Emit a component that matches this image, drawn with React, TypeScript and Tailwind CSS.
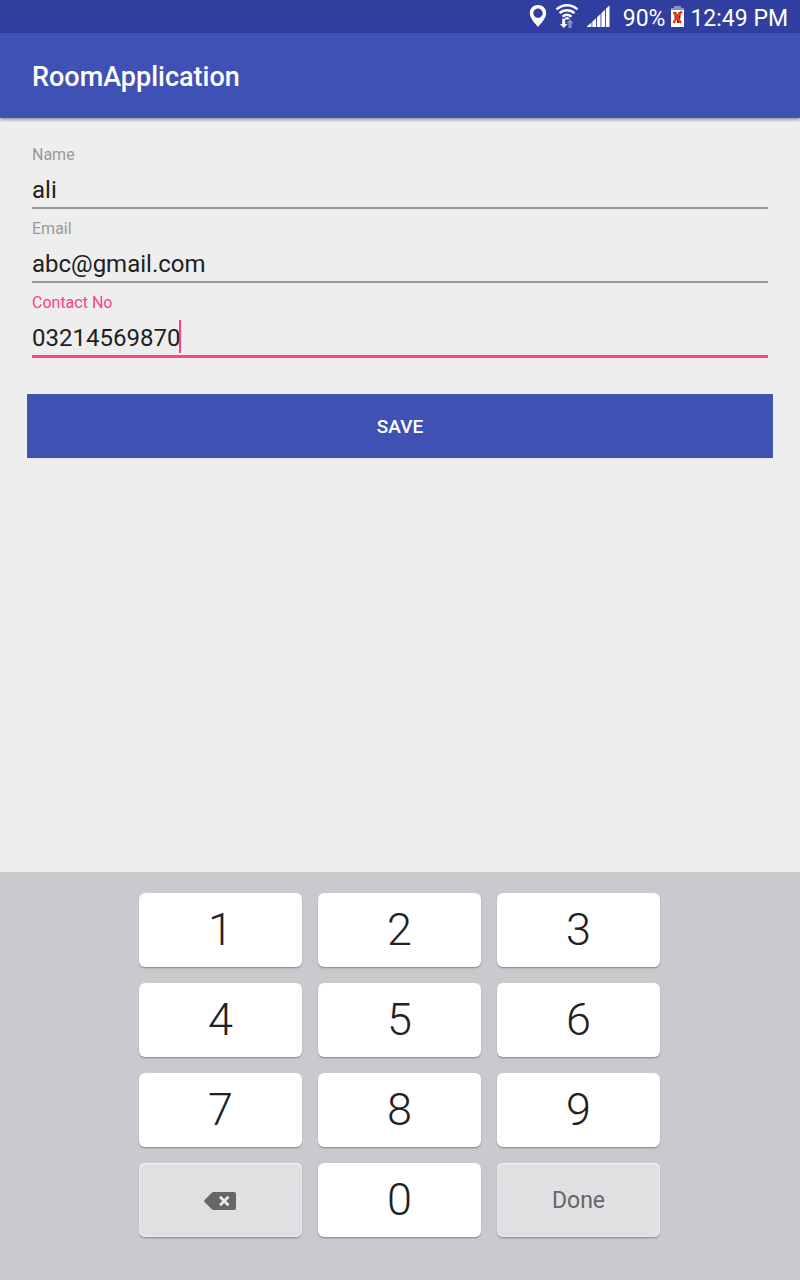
import { useState } from "react";
import clsx from "clsx";

function StatusBar() {
  return (
    <div className="flex h-[33px] items-center justify-end bg-[#303f9f] pr-3 text-white">
      <div className="mr-[13px] flex items-center gap-2 pb-0.5">
        <svg width="18" height="24" viewBox="0 0 18 24" aria-label="Location">
          <path
            fill="#fff"
            fillRule="evenodd"
            d="M9 1C4.300 1 .8 4.500 .8 9c0 5.200 5.400 10.500 8.200 14 2.800-3.500 8.200-8.800 8.200-14C17.200 4.500 13.700 1 9 1Zm0 3.500a4.700 4.700 0 1 1 0 9.400A4.700 4.700 0 0 1 9 4.500Z"
          />
        </svg>
        <svg width="24" height="26" viewBox="0 0 24 26" aria-label="Wi-Fi">
          <g fill="none" stroke="#fff" strokeWidth="2.400">
            <path d="M1.500 6.500C7.500 .8 16.500 .8 22.500 6.500" />
            <path d="M4.500 10.200c4.400-4 10.600-4 15 0" />
            <path d="M7.500 13.600c2.700-2.300 6.300-2.300 9 0" />
          </g>
          <path fill="#fff" d="m9.300 15.400 2.700-1.700 2.700 1.700-1.500 1.200H10.800Z" />
          <path fill="#fff" d="M7.200 15.800h3V21h2.300l-3.800 4L5 21h2.200Z" />
          <path fill="#8790cb" d="M13.500 25v-4.700h-2l3.500-4 3.500 4h-2V25Z" />
        </svg>
        <svg width="23" height="22" viewBox="0 0 23 22" aria-label="Signal strength">
          <g fill="#fff">
            <path d="M0 22v-.8l4.500-3.800V22Z" />
            <path d="M5.300 22v-5.300L9 13.200V22Z" />
            <path d="M9.900 22v-9.600l3.600-3.400V22Z" />
            <path d="M14.400 22V8.200L18 4.700V22Z" />
            <path d="M18.900 22V3.800L22.500 .4V22Z" />
          </g>
        </svg>
      </div>
      <span className="pt-1 text-[23px] leading-8">90%</span>
      <svg width="13" height="21" viewBox="0 0 13 21" className="mx-1.5" aria-label="Battery">
        <path fill="#8790cb" d="M3 0h7v2h3v2H0V2h3Z" />
        <path fill="#fff" d="M0 4h13v17H0Z" />
        <path fill="#303030" d="M3.500 6h2v2h2V6h2v6l-1.500 2v3H6v-3l-2.500-2Z" />
        <path fill="none" stroke="#f13a13" strokeWidth="2.400" d="M2.500 6c2.500 2.500 4.500 7 7.500 11M11 5.500C8 8 5 12 2.500 17" />
      </svg>
      <span className="pt-1 text-[23px] leading-8">12:49 PM</span>
    </div>
  );
}

type FieldProps = {
  id: string;
  label: string;
  type: string;
  initial: string;
  active?: boolean;
};

function Field({ id, label, type, initial, active = false }: FieldProps) {
  const [value, setValue] = useState(initial);
  return (
    <div className="flex h-[74px] flex-col">
      <label
        htmlFor={id}
        className={clsx("text-base leading-[22px]", active ? "text-[#ff4081]" : "text-[#999999]")}
      >
        {label}
      </label>
      <div
        className={clsx(
          "mt-1.5 flex pb-0.5",
          active ? "border-b-3 border-[#ff4081]" : "border-b-2 border-[#969696]",
        )}
      >
        <input
          id={id}
          type={type}
          value={value}
          onChange={(event) => setValue(event.target.value)}
          className={clsx(
            "h-[33px] bg-transparent p-0 pt-0.5 text-2xl leading-8 text-[#212121] outline-none",
            active ? "[field-sizing:content] caret-transparent" : "w-full",
          )}
        />
        {active && <span className="-ml-px h-[33px] w-0.5 bg-[#ff4081]" />}
      </div>
    </div>
  );
}

const lightKey =
  "h-[74px] rounded-md bg-white text-[45px] leading-[72px] font-light text-[#212121] shadow-[0_1px_1px_#8f9094,0_2px_2px_#b9babe]";
const grayKey =
  "flex h-[74px] items-center justify-center rounded-md bg-[#dfe0e2] text-[23px] text-[#666666] shadow-[0_1px_1px_#8f9094,0_2px_2px_#b9babe,inset_0_1px_1px_#f6f6f7,inset_0_0_1px_1px_#e7e8ea]";

function Keypad() {
  return (
    <div className="bg-[#c9cace] pt-[21px] pb-[43px]">
      <div className="mx-auto grid w-full max-w-[522px] grid-cols-3 gap-4 pr-px">
        {["1", "2", "3", "4", "5", "6", "7", "8", "9"].map((digit) => (
          <button key={digit} type="button" className={lightKey}>
            {digit}
          </button>
        ))}
        <button type="button" aria-label="Delete" className={grayKey}>
          <svg width="34" height="20" viewBox="0 0 34 20">
            <path
              fill="#666"
              d="M.3 10.200 7.500 3C8.200 2.300 8.800 2 9.800 2H30a2 2 0 0 1 2 2v14a2 2 0 0 1-2 2H9.800c-1 0-1.600-.3-2.300-1L.3 11.800c-.4-.5-.4-1.100 0-1.600Z"
            />
            <path d="m16 6.800 8.500 8.500m0-8.500L16 15.300" stroke="#e8e9eb" strokeWidth="2.800" />
          </svg>
        </button>
        <button type="button" className={lightKey}>
          0
        </button>
        <button type="button" className={clsx(grayKey, "pt-0.5")}>
          Done
        </button>
      </div>
    </div>
  );
}

export default function App() {
  return (
    <div className="flex min-h-screen flex-col bg-[#eeeeee] font-[Roboto,sans-serif]">
      <StatusBar />
      <header className="flex h-[85px] items-center bg-[#3f51b5] px-8 pt-0.5 shadow-[0_2px_3px_rgba(0,0,0,0.35)]">
        <h1 className="text-[27px] leading-8 font-medium text-white">RoomApplication</h1>
      </header>
      <main className="flex-1 pt-[26px]">
        <form onSubmit={(event) => event.preventDefault()}>
          <div className="px-8">
            <Field id="name" label="Name" type="text" initial="ali" />
            <Field id="email" label="Email" type="text" initial="abc@gmail.com" />
            <Field id="contact" label="Contact No" type="tel" initial="03214569870" active />
          </div>
          <div className="px-[27px] pt-7">
            <button
              type="submit"
              className="h-16 w-full bg-[#3f51b5] pt-0.5 text-[19px] leading-6 font-medium text-white"
            >
              SAVE
            </button>
          </div>
        </form>
      </main>
      <Keypad />
    </div>
  );
}
